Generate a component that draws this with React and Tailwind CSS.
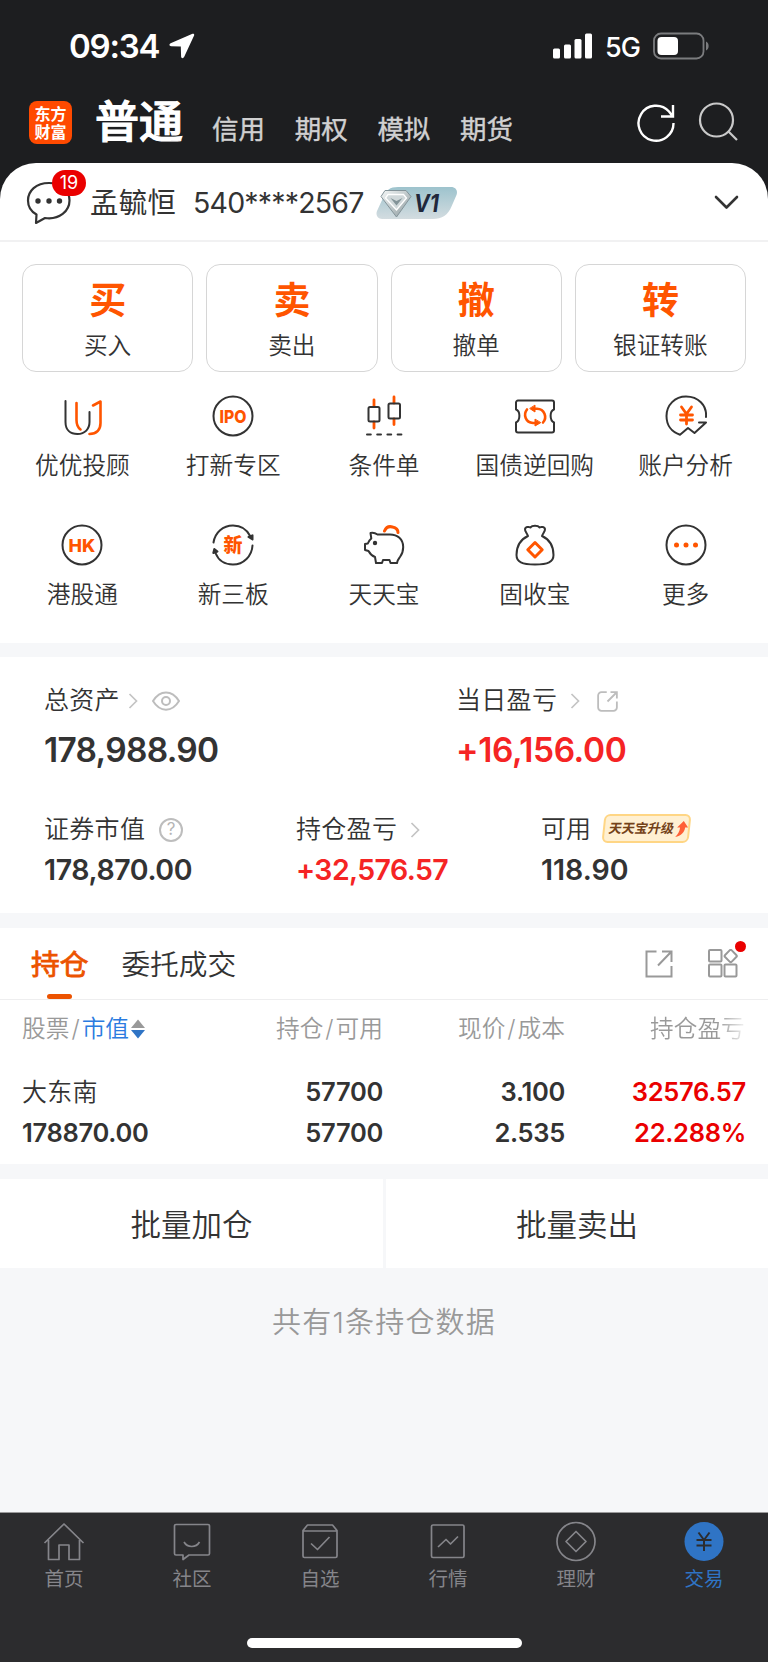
import React, { useState } from "react";

const ACTIONS = [
  { mark: "买", label: "买入" },
  { mark: "卖", label: "卖出" },
  { mark: "撤", label: "撤单" },
  { mark: "转", label: "银证转账" }
];

const HEADER_TABS = ["信用", "期权", "模拟", "期货"];

const DARK = "#333333";
const ORANGE = "#ff5500";

// 42x42 icon frame
function Icon({ children }) {
  return (
    <svg className="shrink-0" width="42" height="42" viewBox="0 0 42 42" fill="none" stroke={DARK} strokeWidth="2" strokeLinecap="round" strokeLinejoin="round">
      {children}
    </svg>
  );
}

function IconText({ x = 21, y, size, children }) {
  return (
    <text x={x} y={y} textAnchor="middle" fontSize={size} fontWeight="800" fill={ORANGE} stroke="none">
      {children}
    </text>
  );
}

const SHORTCUTS = [
  {
    label: "优优投顾",
    icon: (
      <Icon>
        <path d="M4.500 6v21c0 8 5 12 12 12 7.500 0 12-5 12-12V17" />
        <path d="M15.500 8v17c0 5 2 8 4 9.500M32 10.500l7.500-4V28c0 7-4 11-11 11" stroke={ORANGE} strokeWidth="2.600" />
      </Icon>
    )
  },
  {
    label: "打新专区",
    icon: (
      <Icon>
        <circle cx="21" cy="21" r="19.500" />
        <IconText y="27.500" size="17.500">
          <tspan textLength="27" lengthAdjust="spacingAndGlyphs">IPO</tspan>
        </IconText>
      </Icon>
    )
  },
  {
    label: "条件单",
    icon: (
      <Icon>
        <path d="M11 5v6M11 27v6M31 2v6M31 24v5.500" stroke={ORANGE} strokeWidth="2.800" />
        <rect x="5.500" y="12" width="11" height="14.500" rx="1.500" />
        <rect x="25.500" y="8.500" width="11.500" height="15" rx="1.500" />
        <path d="M4 39.500h35" strokeDasharray="3.800 6.400" />
      </Icon>
    )
  },
  {
    label: "国债逆回购",
    icon: (
      <Icon>
        <path d="M4 5.500h34a2 2 0 0 1 2 2v7c-4.500 1.500-4.500 11 0 13v8a2 2 0 0 1-2 2H4a2 2 0 0 1-2-2v-8c4.500-2 4.500-11.500 0-13v-7a2 2 0 0 1 2-2z" />
        <path d="M13 14.500c-4 5-1.500 13 6 13.500h4M29 27.500c4.500-5 1.500-13.500-6-13.700h-4" stroke={ORANGE} strokeWidth="2.600" />
        <path d="M21 10.500v6.500l-5-3.300zM21 24.500v6.500l5.500-3.200z" fill={ORANGE} stroke={ORANGE} strokeWidth="1" />
      </Icon>
    )
  },
  {
    label: "账户分析",
    icon: (
      <Icon>
        <path d="M41 22C42 10 33 1.500 21 1.500 10 1.500 1.500 10 1.500 21c0 9 5 16 13.500 18.700L23 33l6.500 5L41 27.500h-7" />
        <path d="M16.500 12l5 7 5-7M21.500 19v10M15.500 20h12M15.500 25h12" stroke={ORANGE} strokeWidth="2.800" />
      </Icon>
    )
  },
  {
    label: "港股通",
    icon: (
      <Icon>
        <circle cx="21" cy="21" r="19.500" />
        <IconText y="27.500" size="18">HK</IconText>
      </Icon>
    )
  },
  {
    label: "新三板",
    icon: (
      <Icon>
        <path d="M1.500 18.500C3 8.500 11 1.500 21 1.500c7.500 0 14 4 17.500 11M40.500 21.500C40 32 31.500 40.500 21 40.500c-8 0-14.500-4-17.500-11.500" />
        <path d="M36.500 13l4 2.500v-4.200zM1.300 29l1-4 3.200 2.500z" fill={DARK} />
        <IconText y="28" size="19">新</IconText>
      </Icon>
    )
  },
  {
    label: "天天宝",
    icon: (
      <Icon>
        <path d="M21.500 7c1.500-3.500 4.500-5 8-4 3.500.8 5.500 3 5.500 5.500" stroke={ORANGE} strokeWidth="3" />
        <path d="M14.500 10.500C12 8.800 9.500 8.500 7.500 9l.8 5.500c-1.800 1.500-3 3.300-3.500 5L2 20v6l3.500 1c1.500 2.800 4 5 6.500 6l1 6h6l1-3h6.500l1 3H34c.5-3 1.500-4 3-6 2.200-3 3.200-6.500 3.200-10 0-8-5.700-12.500-13.200-12.500z" />
        <circle cx="12" cy="19" r="2.200" fill={DARK} stroke="none" />
      </Icon>
    )
  },
  {
    label: "固收宝",
    icon: (
      <Icon>
        <path d="M14 12c-1.200-3-3.200-4.500-3-7 .3-2 3.500-2.700 5.500-1.500C18 1.200 24 1.200 25.500 3.500c2-1.200 5.200-.5 5.500 1.500.2 2.500-1.800 4-3 7M14 12C6.500 15.500 2.500 22 2.500 31c0 7 5.500 9.500 18.500 9.500S39.500 38 39.500 31c0-9-4-15.500-11.500-19" />
        <path d="M21 18.500l7.200 7.200L21 33l-7.200-7.300z" stroke={ORANGE} strokeWidth="3" />
      </Icon>
    )
  },
  {
    label: "更多",
    icon: (
      <Icon>
        <circle cx="21" cy="21" r="19.500" />
        <g fill={ORANGE} stroke="none">
          <circle cx="11.500" cy="21" r="2.500" />
          <circle cx="21" cy="21" r="2.500" />
          <circle cx="30.500" cy="21" r="2.500" />
        </g>
      </Icon>
    )
  }
];

const NAV_ITEMS = [
  { label: "首页", icon: <path d="M1.500 22L21 3l19.500 19M5.500 19v19.500h10.500V24h10v14.500h10.500V19" /> },
  {
    label: "社区",
    icon: (
      <>
        <path d="M5 3.500h32a1.500 1.500 0 0 1 1.500 1.500v27.500a1.500 1.500 0 0 1-1.500 1.500H18l-6 4.500V34H5a1.500 1.500 0 0 1-1.500-1.500V5A1.500 1.500 0 0 1 5 3.500z" />
        <path d="M13 21c3.500 6 12 6 15.500 0" />
      </>
    )
  },
  {
    label: "自选",
    icon: (
      <>
        <path d="M4 9.500L8.500 4h25L38 9.500V35a1.500 1.500 0 0 1-1.500 1.500h-31A1.500 1.500 0 0 1 4 35zM4 10h34" />
        <path d="M12 22.500l6.500 6L30.500 16" />
      </>
    )
  },
  {
    label: "行情",
    icon: (
      <>
        <rect x="4.500" y="4" width="32.500" height="32.500" rx="1.500" />
        <path d="M11 26l8-7.500 4.500 4.500 7.500-7.500" />
      </>
    )
  },
  {
    label: "理财",
    icon: (
      <>
        <circle cx="21" cy="20.500" r="19" />
        <path d="M21 10.500l10 10-10 10-10-10z" />
      </>
    )
  },
  {
    label: "交易",
    icon: (
      <>
        <circle cx="21" cy="20.500" r="19.500" fill="#2f74c5" stroke="none" />
        <path d="M15.500 11.500l5.500 7.500 5.500-7.500M21 19v11M13.500 19h15M13.500 24.500h15" stroke="#2c2c2e" strokeWidth="2" />
      </>
    )
  }
];

function Arrow() {
  return (
    <svg width="10" height="16" viewBox="0 0 10 16" fill="none" stroke="#c4c4c4" strokeWidth="1.700">
      <path d="M1.500 1l7 7-7 7" />
    </svg>
  );
}

function StatusBar() {
  return (
    <div className="flex h-[92px] items-center pl-[69px] pr-[58px] text-white">
      <span className="w-[100px] pt-px text-[33px] font-semibold tracking-[-1.2px]">09:34</span>
      <svg width="26" height="26" viewBox="0 0 26 26" fill="#fff">
        <path d="M23.500.8L1.600 10.200c-1.800.8-1.400 3 .5 3.100l9.700.2.300 10c.1 2 2.200 2.200 3 .5L25.100 2.500c.5-1.200-.4-2.200-1.600-1.700z" />
      </svg>
      <svg className="ml-auto" width="40" height="26" viewBox="0 0 40 26" fill="#fff">
        <rect x="0" y="15.500" width="7" height="10" rx="1.500" />
        <rect x="11" y="11.500" width="7" height="14" rx="1.500" />
        <rect x="21.500" y="6" width="7" height="19.500" rx="1.500" />
        <rect x="32" y="0.500" width="7" height="25" rx="1.500" />
      </svg>
      <span className="ml-3 w-[35px] pt-1 text-[27px] font-medium tracking-[-1px]">5G</span>
      <svg className="ml-[13px] mr-[-1px]" width="58" height="28" viewBox="0 0 58 28">
        <rect x="1" y="1.500" width="49.500" height="25" rx="7" fill="none" stroke="#7b7c7e" strokeWidth="1.800" />
        <rect x="4.500" y="5" width="20.500" height="18" rx="4" fill="#fff" />
        <path d="M53 9.500c3.500 1.500 3.500 7.500 0 9z" fill="#7b7c7e" />
      </svg>
    </div>
  );
}

function Header() {
  return (
    <div className="flex h-[71px] items-start pl-[29px] pr-[30px]">
      <div className="mt-[9px] flex h-[43px] w-[43px] flex-col items-center justify-center rounded-lg bg-[#ff4a00] text-[16px] font-bold leading-[18px] text-white">
        <span>东方</span>
        <span>财富</span>
      </div>
      <h1 className="ml-[23px] mt-[8px] text-[44px] font-medium leading-[44px] text-white [-webkit-text-stroke:1.2px_#fff]">普通</h1>
      <div className="ml-[29px] mt-[23px] flex gap-[29px] text-[26.500px] leading-[28px] text-[#d0d0d1] [-webkit-text-stroke:0.4px_#d0d0d1]">
        {HEADER_TABS.map(tab => (
          <span key={tab} className="w-[53.700px] whitespace-nowrap">{tab}</span>
        ))}
      </div>
      <svg className="ml-auto mt-[11px]" width="40" height="40" viewBox="0 0 40 40" fill="none" stroke="#fff" strokeWidth="2.400">
        <path d="M37.500 20A17.500 17.500 0 1 1 33 8.500l3.500 4.500M37 2v11.500H25" />
      </svg>
      <svg className="ml-[22px] mt-[10px]" width="40" height="40" viewBox="0 0 40 40" fill="none" stroke="#c9c9c9" strokeWidth="2.200">
        <circle cx="18.500" cy="18" r="16.500" />
        <path d="M30 29l9 9" />
      </svg>
    </div>
  );
}

function AccountRow() {
  return (
    <div className="flex h-[79px] items-center border-b-2 border-[#f1f1f2] pl-[26px] pr-[29px] pt-0.5">
      <div className="relative h-[44px] w-[46px]">
        <svg width="46" height="44" viewBox="0 0 46 44" fill="none" stroke={DARK} strokeWidth="2.200" strokeLinejoin="round">
          <path d="M23 2C10 2 2 10 2 19.500c0 6 3 11 8.500 14L10 42l9-5c14.500 2 24.500-7 24.500-17.500C43.500 9.500 35 2 23 2z" />
          <g fill={DARK} stroke="none">
            <circle cx="12" cy="20" r="2.700" />
            <circle cx="23" cy="20" r="2.700" />
            <circle cx="33.500" cy="20" r="2.700" />
          </g>
        </svg>
        <span className="absolute left-[26px] top-[-11px] flex h-[26px] w-[34px] items-center justify-center rounded-full bg-[#ea0000] text-[18px] text-white">19</span>
      </div>
      <span className="ml-[18px] w-[86px] whitespace-nowrap pt-0.5 text-[28.300px] tracking-[0.4px] text-[#333]">孟毓恒</span>
      <span className="ml-[17px] w-[170px] whitespace-nowrap pt-0.5 text-[28.500px] tracking-[-0.8px] text-[#333]">540****2567</span>
      <svg className="ml-[13px]" width="82" height="34" viewBox="0 0 82 34">
        <defs>
          <linearGradient id="vipBg" x1="0" y1="0" x2="0" y2="1">
            <stop offset="0" stopColor="#9dc3cd" />
            <stop offset="1" stopColor="#d3dce0" />
          </linearGradient>
          <linearGradient id="gem" x1="0" y1="0" x2="1" y2="1">
            <stop offset="0" stopColor="#f4f7f7" />
            <stop offset="1" stopColor="#8b999d" />
          </linearGradient>
        </defs>
        <path d="M22 1h53c5 0 7 4 5.500 8l-5 11.500C72 29 66 33 57 33H6c-4.500 0-6.500-4-5-8L7 12C10 4 14 1 22 1z" fill="url(#vipBg)" />
        <path d="M9 4.500h21l5 6L20.500 31 5 10.500z" fill="url(#gem)" stroke="#84949a" />
        <path d="M12 8.500h15.500l3 3.500-10 12-11-12z" fill="#d0d8da" stroke="#fff" strokeWidth="1.300" />
        <path d="M14.500 12l6 7.500 6-7.500-6 3z" fill="#839398" />
        <text x="38" y="25.500" fontSize="24" fontWeight="700" fontStyle="italic" fill="#20283c" textLength="25" lengthAdjust="spacingAndGlyphs">V1</text>
      </svg>
      <svg className="ml-auto" width="25" height="15" viewBox="0 0 25 15" fill="none" stroke={DARK} strokeWidth="2.600" strokeLinecap="round" strokeLinejoin="round">
        <path d="M2 2l10.500 10.500L23 2" />
      </svg>
    </div>
  );
}

function ShareIcon({ size, color, width, rounded }) {
  return (
    <svg width={size} height={size} viewBox="0 0 28 28" fill="none" stroke={color} strokeWidth={width}>
      {rounded ? (
        <path d="M13 1.500H6A4.500 4.500 0 0 0 1.500 6v16A4.500 4.500 0 0 0 6 26.500h16a4.500 4.500 0 0 0 4.500-4.500V14M14 14L26 2M18 1.500h8.500V10" />
      ) : (
        <path d="M11.500 1.500h-10v25h25V16M13 15.500L26 2M17 1.500h9.500V12" />
      )}
    </svg>
  );
}

function Assets() {
  return (
    <div className="h-[256px] bg-white pl-[44px] text-[#333]">
      <div className="flex pt-[28px]">
        <div className="w-[412px]">
          <div className="flex h-8 items-center">
            <span className="text-[25px] font-[350] tracking-[0.3px]">总资产</span>
            <span className="ml-[8px]"><Arrow /></span>
            <svg className="ml-[14px]" width="28" height="20" viewBox="0 0 28 20" fill="none" stroke="#bdbdbd" strokeWidth="2">
              <path d="M1 10C8-1.500 20-1.500 27 10 20 21.500 8 21.500 1 10z" />
              <circle cx="14" cy="10" r="4" />
            </svg>
          </div>
          <div className="mt-[13px] text-[33.500px] font-semibold leading-[40px] tracking-[-0.7px]">178,988.90</div>
        </div>
        <div>
          <div className="flex h-8 items-center">
            <span className="text-[25px] font-[350] tracking-[0.3px]">当日盈亏</span>
            <span className="ml-[13px]"><Arrow /></span>
            <span className="ml-[17px]"><ShareIcon size={21} color="#bdbdbd" width="2.400" rounded /></span>
          </div>
          <div className="mt-[13px] text-[33.500px] font-semibold leading-[40px] tracking-[-0.4px] text-[#f52424]">+16,156.00</div>
        </div>
      </div>
      <div className="flex pt-[44px]">
        <div className="w-[252px]">
          <div className="flex h-8 items-center">
            <span className="text-[25px] font-[350] tracking-[0.3px]">证券市值</span>
            <span className="ml-[14px] flex h-[24px] w-[24px] items-center justify-center rounded-full border-2 border-[#bdbdbd] text-[17px] text-[#b5b5b5]">?</span>
          </div>
          <div className="mt-[7px] text-[28.500px] font-semibold leading-[34px] tracking-[-0.4px]">178,870.00</div>
        </div>
        <div className="w-[245px]">
          <div className="flex h-8 items-center">
            <span className="text-[25px] font-[350] tracking-[0.3px]">持仓盈亏</span>
            <span className="ml-[13px]"><Arrow /></span>
          </div>
          <div className="mt-[7px] text-[28.500px] font-semibold leading-[34px] tracking-[-0.6px] text-[#f52424]">+32,576.57</div>
        </div>
        <div>
          <div className="flex h-8 items-center">
            <span className="text-[25px] font-[350]">可用</span>
            <span className="ml-[12px] mt-[-4px] flex h-[29px] w-[87px] -skew-x-6 items-center rounded-md border-2 border-[#ffd685] bg-[#fff0d2] pl-1">
              <span className="-skew-x-6 whitespace-nowrap text-[13px] font-bold text-[#744219]">天天宝升级</span>
              <svg className="ml-0.5" width="12" height="16" viewBox="0 0 12 16" fill="#ff6037">
                <path d="M7 0l5 6.500H9C9 11 6 15 0 16c2.500-2.500 4-5.500 4-9.500H1z" />
              </svg>
            </span>
          </div>
          <div className="mt-[7px] text-[28.500px] font-semibold leading-[34px]">118.90</div>
        </div>
      </div>
    </div>
  );
}

function Holdings() {
  const [tab, setTab] = useState(0);
  return (
    <div className="h-[236px] bg-white">
      <div className="flex h-[72px] items-center border-b border-[#eeeeef] pl-[31px] pr-[30px]">
        {["持仓", "委托成交"].map((name, i) => (
          <button
            key={name}
            onClick={() => setTab(i)}
            className={`flex h-[72px] flex-col items-center pt-[19px] text-[28.700px] leading-[36px] ${
              tab === i ? "text-[#ec5300] [-webkit-text-stroke:0.8px_#ec5300]" : "font-[350] text-[#333]"
            } ${i === 1 ? "ml-[33px]" : ""}`}
          >
            {name}
            {tab === i && <span className="mt-[11px] h-[5px] w-[25px] rounded-sm bg-[#ec5300]" />}
          </button>
        ))}
        <span className="ml-auto"><ShareIcon size={28} color="#999" width="2" /></span>
        <div className="relative ml-[35px]">
          <svg width="30" height="29" viewBox="0 0 30 29" fill="none" stroke="#999" strokeWidth="2">
            <rect x="1" y="1" width="12.500" height="11.500" rx="1" />
            <rect x="1" y="15.500" width="12.500" height="12" rx="1" />
            <rect x="16.500" y="15.500" width="12" height="12" rx="1" />
            <rect x="18" y="2.300" width="9.400" height="9.400" rx="1.500" transform="rotate(45 22.700 7)" />
          </svg>
          <span className="absolute right-[-8px] top-[-8px] h-[11px] w-[11px] rounded-full bg-[#ea0000]" />
        </div>
      </div>

      {/* 表头 */}
      <div className="flex h-[58px] items-center pl-[22px] pr-[22px] text-[23.700px] font-[350] text-[#999]">
        <div className="flex w-[160px] items-center">
          股票<span className="mx-[2px]">/</span><span className="text-[#2b7be0]">市值</span>
          <svg className="ml-0.5" width="14" height="20" viewBox="0 0 14 20">
            <path d="M0 9L7 0.500 14 9z" fill="#999" />
            <path d="M0 11l7 8.500 7-8.500z" fill="#2f74c5" />
          </svg>
        </div>
        <div className="w-[201px] text-right">持仓<span className="mx-[2px]">/</span>可用</div>
        <div className="w-[182px] text-right">现价<span className="mx-[2px]">/</span>成本</div>
        <div className="ml-auto w-[96px] whitespace-nowrap bg-gradient-to-r from-[#999] from-70% to-[#f5f5f5] bg-clip-text text-transparent">持仓盈亏</div>
      </div>

      {/* 持仓行 */}
      <div className="flex px-[22px] pt-[14px] text-[25.500px] font-semibold leading-[40.500px] tracking-[-0.3px] text-[#333]">
        <div className="w-[160px]">
          <div className="text-[25px] font-[350] tracking-[0.3px]">大东南</div>
          <div>178870.00</div>
        </div>
        <div className="w-[201px] text-right">
          <div>57700</div>
          <div>57700</div>
        </div>
        <div className="w-[182px] text-right">
          <div>3.100</div>
          <div>2.535</div>
        </div>
        <div className="ml-auto text-right text-[#ea0000]">
          <div>32576.57</div>
          <div>22.288%</div>
        </div>
      </div>
    </div>
  );
}

function BottomNav() {
  return (
    <div className="flex h-[150px] flex-col border-t border-[#9a9a9b] bg-[#2c2c2e]">
      <div className="flex pt-[8px]">
        {NAV_ITEMS.map(({ label, icon }, i) => (
          <button key={label} className={`flex w-32 flex-col items-center text-[19.500px] leading-[28px] ${i === 5 ? "text-[#2f74c5]" : "text-[#85858a]"}`}>
            <svg width="42" height="42" viewBox="0 0 42 42" fill="none" stroke="currentColor" strokeWidth="1.700" strokeLinejoin="round">
              {icon}
            </svg>
            <span className="mt-[2px]">{label}</span>
          </button>
        ))}
      </div>
      <div className="mx-auto mb-[14px] mt-auto h-[10px] w-[275px] rounded-full bg-white" />
    </div>
  );
}

export default function App() {
  return (
    <div className="flex h-[1662px] w-[768px] flex-col overflow-hidden bg-[#f6f7f9] font-['Inter','Noto_Sans_CJK_SC',sans-serif]">
      <div className="bg-[#1d1e20]">
        <StatusBar />
        <Header />
        <div className="h-[480px] rounded-t-[36px] bg-white">
          <AccountRow />
          <div className="grid grid-cols-4 gap-[13px] px-[22px] pt-[22px]">
            {ACTIONS.map(({ mark, label }) => (
              <button key={label} className="flex h-[108px] flex-col items-center rounded-[14px] border border-[#d6d6d6] pt-[16px]">
                <span className="text-[37px] font-bold leading-[40px] text-[#ff5500]">{mark}</span>
                <span className="mt-[10px] text-[23.700px] font-[350] leading-[30px] text-[#333]">{label}</span>
              </button>
            ))}
          </div>
          <div className="grid grid-cols-5 gap-y-[43px] px-[7px] pt-[23px]">
            {SHORTCUTS.map(({ label, icon }) => (
              <button key={label} className="flex h-[86px] flex-col items-center">
                {icon}
                <span className="mt-[14px] whitespace-nowrap text-[23.700px] font-[350] leading-[30px] text-[#333]">{label}</span>
              </button>
            ))}
          </div>
        </div>
      </div>

      <div className="mt-[14px]"><Assets /></div>
      <div className="mt-[15px]"><Holdings /></div>

      <div className="mt-[15px] flex gap-[3px] text-[30.500px] font-[350] text-[#333]">
        <button className="h-[89px] w-[383px] whitespace-nowrap bg-white pt-0.5">批量加仓</button>
        <button className="h-[89px] flex-1 bg-white pt-0.5">批量卖出</button>
      </div>
      <div className="pt-[37px] text-center text-[29px] font-[350] leading-[36px] tracking-[1.200px] text-[#999]">共有1条持仓数据</div>

      <div className="mt-auto"><BottomNav /></div>
    </div>
  );
}
